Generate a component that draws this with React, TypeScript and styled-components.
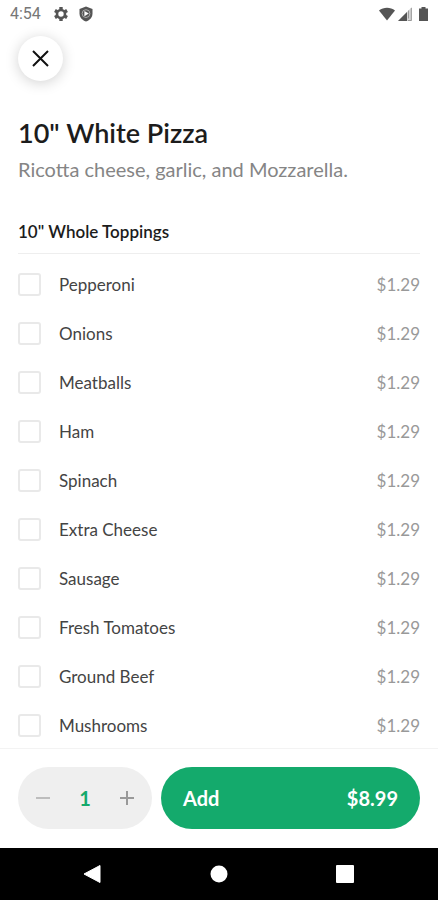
import React, { useState } from "react";
import styled, { createGlobalStyle } from "styled-components";

const GlobalStyle = createGlobalStyle`
  *, *::before, *::after { box-sizing: border-box; }
  body { margin: 0; background: #ffffff; }
  button, input { font: inherit; }
  h1, h2, p, ul { margin: 0; padding: 0; }
`;

const Screen = styled.div`
  display: flex;
  flex-direction: column;
  height: 100vh;
  background: #ffffff;
  color: #1c1c1c;
  font-family: Lato, "Liberation Sans", sans-serif;
`;

const StatusBar = styled.header`
  display: flex;
  flex: none;
  align-items: center;
  justify-content: space-between;
  height: 28px;
  padding: 0 8px 0 10px;
  color: #555555;
  font: 16px/28px Roboto, "Noto Sans", sans-serif;
`;

const StatusGroup = styled.div<{ $gap: number }>`
  display: flex;
  align-items: center;
  gap: ${({ $gap }) => $gap}px;
`;

const Clock = styled.time`
  margin-right: 3px;
  color: #777777;
`;

const Toolbar = styled.div`
  display: flex;
  flex: none;
  padding: 8px 18px 0;
`;

const CloseButton = styled.button`
  display: grid;
  place-items: center;
  width: 45px;
  height: 45px;
  padding: 0;
  border: 0;
  border-radius: 50%;
  background: #ffffff;
  color: #111111;
  box-shadow: 0 2px 14px rgba(0, 0, 0, 0.18);
`;

const Content = styled.main`
  flex: 1;
  min-height: 0;
  overflow: hidden;
  padding: 36px 18px 0;
`;

const Title = styled.h1`
  font-size: 27px;
  font-weight: 600;
  line-height: 32px;
`;

const Description = styled.p`
  padding-top: 8px;
  color: #858585;
  font-size: 20px;
  line-height: 24px;
`;

const SectionTitle = styled.h2`
  margin-top: 40px;
  padding-bottom: 10px;
  border-bottom: 1px solid #eeeeee;
  font-size: 17px;
  font-weight: 600;
  line-height: 22px;
`;

const ToppingList = styled.ul`
  padding-top: 6px;
  list-style: none;
`;

const ToppingRow = styled.label`
  display: flex;
  align-items: center;
  gap: 18px;
  height: 49px;
  color: #444444;
  font-size: 17px;
`;

const Checkbox = styled.input`
  appearance: none;
  flex: none;
  width: 23px;
  height: 23px;
  margin: 0;
  border: 2px solid #e9e9e9;
  border-radius: 3px;
  background: #ffffff;

  &:checked {
    border-color: #14aa6c;
    background: #14aa6c;
  }
`;

const Price = styled.span`
  margin-left: auto;
  color: #999999;
`;

const OrderBar = styled.footer`
  display: flex;
  flex: none;
  gap: 9px;
  padding: 18px 18px 19px;
  border-top: 1px solid #f3f3f3;
  background: #ffffff;
`;

const Stepper = styled.div`
  display: flex;
  flex: none;
  align-items: center;
  justify-content: space-between;
  width: 134px;
  height: 62px;
  padding: 0 13px;
  border-radius: 31px;
  background: #efefef;
`;

const StepButton = styled.button`
  display: grid;
  place-items: center;
  width: 24px;
  height: 40px;
  padding: 0;
  border: 0;
  background: none;
  color: #999999;

  &:disabled {
    color: #bdbdbd;
  }
`;

const Quantity = styled.output`
  color: #14aa6c;
  font-size: 20px;
  font-weight: 700;
`;

const AddButton = styled.button`
  display: flex;
  flex: 1;
  align-items: center;
  justify-content: space-between;
  height: 62px;
  padding: 0 22px;
  border: 0;
  border-radius: 31px;
  background: #14aa6c;
  color: #ffffff;
  font-size: 20px;
  font-weight: 700;
`;

const SystemNav = styled.nav`
  display: flex;
  flex: none;
  align-items: center;
  justify-content: center;
  gap: 86px;
  height: 52px;
  background: #000000;
`;

const NavButton = styled.button`
  display: grid;
  place-items: center;
  width: 40px;
  height: 40px;
  padding: 0;
  border: 0;
  background: none;
  color: #ffffff;
`;

const toppings = [
  "Pepperoni",
  "Onions",
  "Meatballs",
  "Ham",
  "Spinach",
  "Extra Cheese",
  "Sausage",
  "Fresh Tomatoes",
  "Ground Beef",
  "Mushrooms",
];

const BASE_PRICE = 8.99;
const TOPPING_PRICE = 1.29;

export default function App() {
  const [quantity, setQuantity] = useState(1);
  const [selected, setSelected] = useState<string[]>([]);
  const total = quantity * (BASE_PRICE + selected.length * TOPPING_PRICE);

  const toggle = (name: string) =>
    setSelected((names) =>
      names.includes(name) ? names.filter((n) => n !== name) : [...names, name],
    );

  return (
    <Screen>
      <GlobalStyle />
      <StatusBar>
        <StatusGroup $gap={9}>
          <Clock>4:54</Clock>
          <svg width="16" height="16" viewBox="0 0 16 16" aria-hidden="true">
            <circle cx="8" cy="8" r="4" fill="none" stroke="currentColor" strokeWidth="2.600" />
            <path
              d="M8 1v2.500M8 12.500V15M1.940 4.500 4.100 5.750M11.900 10.250 14.060 11.500M1.940 11.500 4.100 10.250M11.900 5.750 14.060 4.500"
              stroke="currentColor"
              strokeWidth="3.400"
            />
          </svg>
          <svg width="16" height="16" viewBox="0 0 16 16" aria-hidden="true">
            <path d="M8 .5 14.500 3v4.500c0 3.700-2.500 6.700-6.500 8-4-1.300-6.500-4.300-6.500-8V3z" fill="currentColor" />
            <circle cx="8" cy="7.600" r="3.900" fill="none" stroke="#aaaaaa" />
            <path d="M6.400 5 10.800 7.600 6.400 10.200z" fill="#ffffff" />
          </svg>
        </StatusGroup>
        <StatusGroup $gap={3}>
          <svg width="16" height="14" viewBox="0 0 16 14" aria-hidden="true">
            <path d="M0 3.500C4.500-.3 11.500-.3 16 3.500L8 13.500z" fill="currentColor" />
          </svg>
          <svg width="14" height="14" viewBox="0 0 14 14" aria-hidden="true">
            <path d="M14 0v14H0z" fill="#d6d6d6" />
            <path d="M9 5v9H0z" fill="currentColor" />
            <path d="M10.500 3.500v8M13.300 1v12.500H10" fill="none" stroke="#999999" />
          </svg>
          <svg width="15" height="14" viewBox="0 0 15 14" aria-hidden="true">
            <path d="M6.500 0h4v1.500H13V14H4V1.500h2.500z" fill="currentColor" />
          </svg>
        </StatusGroup>
      </StatusBar>

      <Toolbar>
        <CloseButton type="button" aria-label="Close">
          <svg width="17" height="17" viewBox="0 0 17 17" aria-hidden="true">
            <path d="m1 1 15 15m0-15L1 16" stroke="currentColor" strokeWidth="2" />
          </svg>
        </CloseButton>
      </Toolbar>

      <Content>
        <Title>10" White Pizza</Title>
        <Description>Ricotta cheese, garlic, and Mozzarella.</Description>
        <SectionTitle>10" Whole Toppings</SectionTitle>
        <ToppingList>
          {toppings.map((name) => (
            <li key={name}>
              <ToppingRow>
                <Checkbox
                  type="checkbox"
                  checked={selected.includes(name)}
                  onChange={() => toggle(name)}
                />
                <span>{name}</span>
                <Price>${TOPPING_PRICE.toFixed(2)}</Price>
              </ToppingRow>
            </li>
          ))}
        </ToppingList>
      </Content>

      <OrderBar>
        <Stepper role="group" aria-label="Quantity">
          <StepButton
            type="button"
            aria-label="Decrease quantity"
            disabled={quantity === 1}
            onClick={() => setQuantity(quantity - 1)}
          >
            <svg width="14" height="14" viewBox="0 0 14 14" aria-hidden="true">
              <path d="M0 7h14" stroke="currentColor" strokeWidth="2" />
            </svg>
          </StepButton>
          <Quantity>{quantity}</Quantity>
          <StepButton
            type="button"
            aria-label="Increase quantity"
            onClick={() => setQuantity(quantity + 1)}
          >
            <svg width="14" height="14" viewBox="0 0 14 14" aria-hidden="true">
              <path d="M0 7h14M7 0v14" stroke="currentColor" strokeWidth="2" />
            </svg>
          </StepButton>
        </Stepper>
        <AddButton type="button">
          <span>Add</span>
          <span>${total.toFixed(2)}</span>
        </AddButton>
      </OrderBar>

      <SystemNav aria-label="System">
        <NavButton type="button" aria-label="Back">
          <svg width="20" height="20" viewBox="0 0 20 20" aria-hidden="true">
            <path d="M17 1.500v17L1 10z" fill="currentColor" stroke="currentColor" strokeLinejoin="round" />
          </svg>
        </NavButton>
        <NavButton type="button" aria-label="Home">
          <svg width="18" height="18" viewBox="0 0 18 18" aria-hidden="true">
            <circle cx="9" cy="9" r="8.500" fill="currentColor" />
          </svg>
        </NavButton>
        <NavButton type="button" aria-label="Recent apps">
          <svg width="18" height="18" viewBox="0 0 18 18" aria-hidden="true">
            <rect width="18" height="18" rx="1" fill="currentColor" />
          </svg>
        </NavButton>
      </SystemNav>
    </Screen>
  );
}
